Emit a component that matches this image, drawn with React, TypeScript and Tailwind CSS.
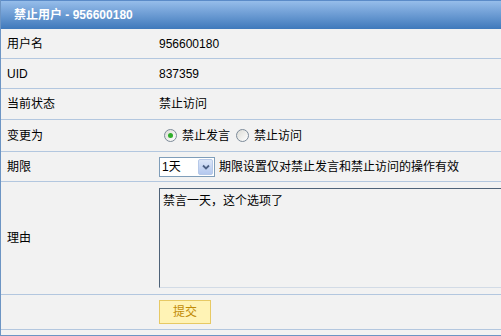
import { useState } from "react"

const font = { fontFamily: '"Liberation Sans", "Noto Sans CJK SC", sans-serif' }

function Row({ label, children, className = "h-[30px]" }: { label: string; children: React.ReactNode; className?: string }) {
  return (
    <div className={`flex items-center border-b border-[#b3c7df] ${className}`}>
      <div className="w-[158px] shrink-0 pl-[6px]">{label}</div>
      <div className="flex flex-1 items-center">{children}</div>
    </div>
  )
}

function Radio({ checked }: { checked: boolean }) {
  return (
    <span className="relative flex size-[13px] items-center justify-center rounded-full border border-[#7c8a99] bg-gradient-to-br from-[#dcdcd6] to-white">
      {checked && <span className="size-[5px] rounded-full bg-[#2fae2a]" />}
    </span>
  )
}

export default function App() {
  const [mode, setMode] = useState("post")
  const [reason, setReason] = useState("禁言一天，这个选项了")

  return (
    <div style={font} className="h-[336px] w-[501px] overflow-hidden bg-[#f2f2f2] text-[12px] text-black">
      <div className="border-b border-l border-[#6d95c4]">
        <div className="flex h-[29px] items-center border-t border-[#5b8bc8] bg-gradient-to-b from-[#96bdea] to-[#3f79bb] pl-[13px] text-[12px] font-bold text-white">
          禁止用户 - 956600180
        </div>
        <Row label="用户名">956600180</Row>
        <Row label="UID">837359</Row>
        <Row label="当前状态" className="h-[31px]">禁止访问</Row>
        <Row label="变更为" className="h-[32px]">
          <label className="ml-[5px] flex items-center gap-[5px]" onClick={() => setMode("post")}>
            <Radio checked={mode === "post"} />
            <span>禁止发言</span>
          </label>
          <label className="ml-[6px] flex items-center gap-[5px]" onClick={() => setMode("visit")}>
            <Radio checked={mode === "visit"} />
            <span>禁止访问</span>
          </label>
        </Row>
        <Row label="期限">
          <div className="flex h-[20px] w-[56px] items-center border border-[#7f9db9] bg-white pl-[2px]">
            <span className="flex-1">1天</span>
            <span className="mr-px flex h-[16px] w-[15px] items-center justify-center rounded-[2px] border border-[#b6c8e8] bg-gradient-to-b from-[#dce6f8] to-[#b4c8ee]">
              <svg width="8" height="6" viewBox="0 0 8 6">
                <path d="M1 1.5 L4 4.5 L7 1.5" fill="none" stroke="#4d6185" strokeWidth="1.8" />
              </svg>
            </span>
          </div>
          <span className="ml-[4px]">期限设置仅对禁止发言和禁止访问的操作有效</span>
        </Row>
        <Row label="理由" className="h-[113px]">
          <textarea
            value={reason}
            onChange={(e) => setReason(e.target.value)}
            style={font}
            className="h-[100px] w-[360px] shrink-0 resize-none border border-b-[#d2dbe6] border-l-[#4e6278] border-r-[#d2dbe6] border-t-[#4e6278] bg-[#f2f2f2] px-[3px] py-[3px] text-[12px] outline-none"
          />
        </Row>
        <Row label="" className="h-[35px]">
          <button
            style={font}
            className="h-[24px] w-[52px] border border-[#e7c964] bg-[#fff3b5] text-[12px] text-[#c18b06]"
          >
            提交
          </button>
        </Row>
        <div className="h-[5px]" />
      </div>
    </div>
  )
}
